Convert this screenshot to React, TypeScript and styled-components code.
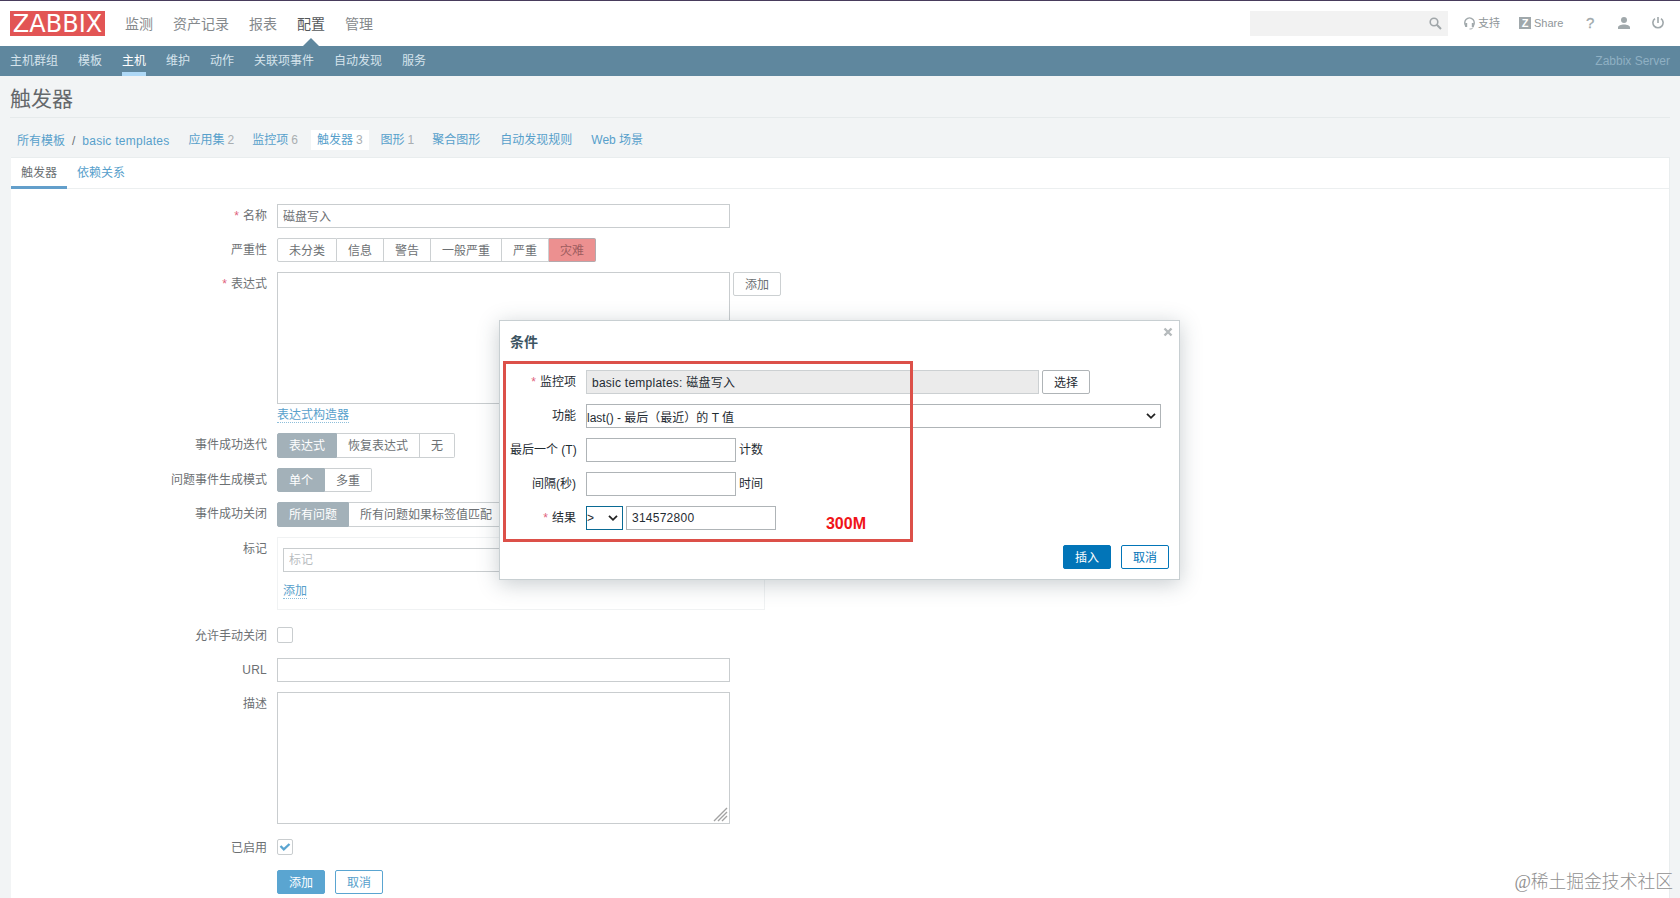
import React from "react";
import styled, { createGlobalStyle, css } from "styled-components";

const Global = createGlobalStyle`
  *, *::before, *::after { box-sizing: border-box; }
  html, body { height: 898px; overflow: hidden; }
  body {
    margin: 0;
    background: #f2f4f5;
    font-family: "Liberation Sans", "Noto Sans CJK SC", sans-serif;
    font-size: 12px;
    color: #6c7073;
  }
  input, textarea, button { font: inherit; color: inherit; margin: 0; }
`;

const Page = styled.div`
  position: relative;
  height: 898px;
  overflow: hidden;
  border-top: 1px solid #483b5c;
`;

const Header = styled.header`
  display: flex;
  align-items: center;
  height: 45px;
  padding: 0 10px;
  background: #fff;
`;

const Logo = styled.div`
  width: 95px;
  height: 25px;
  background: #e25555;
  color: #fff;
  font: 24px/27px "DejaVu Sans", sans-serif;
  text-align: center;
  white-space: nowrap;
`;

const MainMenu = styled.nav`
  display: flex;
  gap: 20px;
  margin-left: 20px;
  font-size: 14px;
  line-height: 47px;
  height: 45px;
`;

const MainItem = styled.a<{ $active?: boolean }>`
  position: relative;
  height: 45px;
  color: ${(p) => (p.$active ? "#54585b" : "#85898c")};
  ${(p) =>
    p.$active &&
    css`
      &::after {
        content: "";
        position: absolute;
        left: 6px;
        bottom: 0;
        border: 8px solid transparent;
        border-top: 0;
        border-bottom-color: #5f879e;
      }
    `}
`;

const UserTools = styled.div`
  display: flex;
  align-items: center;
  margin-left: auto;
  padding-right: 6px;
  padding-bottom: 1px;
  font-size: 11px;
  color: #8f9699;
  svg { display: block; }
`;

const Search = styled.div`
  display: flex;
  align-items: center;
  justify-content: flex-end;
  width: 198px;
  height: 25px;
  margin: 1px 16px 0 0;
  padding-right: 6px;
  background: #f2f2f2;
`;

const Tool = styled.a<{ $w?: number }>`
  display: flex;
  align-items: center;
  gap: 3px;
  width: ${(p) => (p.$w ? `${p.$w}px` : "auto")};
  line-height: 16px;
  white-space: nowrap;
`;

const ShareMark = styled.span`
  width: 12px;
  height: 12px;
  background: #a0a8ab;
  color: #fff;
  font-weight: bold;
  font-size: 11px;
  line-height: 12px;
  text-align: center;
`;

const HelpMark = styled.span`
  font-size: 15px;
  -webkit-text-stroke: 0.3px #a0a8ab;
  color: #a0a8ab;
`;

const SubMenu = styled.nav`
  display: flex;
  gap: 20px;
  height: 30px;
  padding: 0 10px;
  background: #5f879e;
  color: #d5e3ec;
  line-height: 31px;
`;

const SubItem = styled.a<{ $active?: boolean }>`
  height: 30px;
  ${(p) => p.$active && "color: #fff; border-bottom: 4px solid #aed8f6;"}
`;

const ServerName = styled.span`
  margin-left: auto;
  color: #8fb0c3;
`;

const Title = styled.h1`
  margin: 0 10px;
  height: 42px;
  border-bottom: 1px solid #e6eaeb;
  font-size: 21px;
  font-weight: 400;
  line-height: 45px;
  color: #64686b;
`;

const Crumbs = styled.div`
  display: flex;
  height: 39px;
  padding: 12px 16px 0 17px;
  color: #57a0cb;
  line-height: 21px;
  white-space: nowrap;
`;

const Crumb = styled.a<{ $ml?: number; $selected?: boolean }>`
  display: flex;
  gap: 3px;
  height: 20px;
  margin-left: ${(p) => p.$ml ?? 0}px;
  ${(p) => p.$selected && "background: #fff; padding: 0 6px;"}
`;

const Path = styled.div`
  display: flex;
  line-height: 23px;
`;

const Count = styled.span`
  color: #a9aeb1;
`;

const Slash = styled.span`
  margin-left: 7px;
  color: #6c7073;
`;

const Latin = styled.span`
  letter-spacing: 0.25px;
`;

const Panel = styled.main`
  margin: 0 10px 0 11px;
  height: 760px;
  background: #fff;
  border: solid #e9edee;
  border-width: 1px 1px 0 0;
`;

const Tabs = styled.div`
  display: flex;
  height: 31px;
  border-bottom: 1px solid #eceff0;
  line-height: 31px;
`;

const Tab = styled.a<{ $active?: boolean }>`
  height: 31px;
  padding: 0 10px;
  color: ${(p) => (p.$active ? "#6c7073" : "#57a0cb")};
  ${(p) => p.$active && "border-bottom: 3px solid #639fcb;"}
`;

const Form = styled.form`
  padding-top: 15px;
  display: flex;
  flex-direction: column;
  gap: 10px;
`;

const Row = styled.div<{ $h?: number; $mt?: number }>`
  display: flex;
  flex: none;
  height: ${(p) => p.$h ?? 24}px;
  margin-top: ${(p) => p.$mt ?? 0}px;
`;

const Label = styled.label<{ $w?: number; $required?: boolean }>`
  width: ${(p) => p.$w ?? 256}px;
  margin-right: 10px;
  text-align: right;
  line-height: 25px;
  white-space: nowrap;
  ${(p) =>
    p.$required &&
    css`
      &::before {
        content: "*";
        margin-right: 4px;
        color: #e0627c;
      }
    `}
`;

const Input = styled.input<{ $w: number; $dark?: boolean; $drop?: number }>`
  width: ${(p) => p.$w}px;
  height: 24px;
  padding: 0 5px ${(p) => 2 - (p.$drop ?? 0)}px;
  border: 1px solid ${(p) => (p.$dark ? "#afb4b7" : "#c9cdcf")};
  border-radius: 0;
  background: #fff;
  outline: none;
  letter-spacing: ${(p) => (p.$dark ? "0.25px" : "normal")};
  &::placeholder { color: #b9bdbf; opacity: 1; }
  &:read-only { background: #ebebeb; border-color: #ccd0d2; }
`;

const Area = styled.div`
  display: flex;
  align-items: flex-end;
  justify-content: flex-end;
  width: 453px;
  height: 132px;
  padding: 0 1px 1px 0;
  border: 1px solid #c9cdcf;
`;

const Stack = styled.div`
  display: flex;
  flex-direction: column;
  align-items: flex-start;
`;

const DotLink = styled.a`
  color: #57a0cb;
  height: 19px;
  line-height: 14px;
  padding-top: 4px;
  border-bottom: 1px dotted #8dbfdb;
`;

const Segments = styled.div`
  display: flex;
  height: 100%;
`;

const Segment = styled.span<{ $on?: boolean; $danger?: boolean }>`
  display: flex;
  align-items: center;
  height: 100%;
  padding: 0 11px 2px;
  border: 1px solid #ccd0d2;
  border-left-width: 0;
  white-space: nowrap;
  &:first-child { border-left-width: 1px; border-radius: 2px 0 0 2px; }
  &:last-child { border-radius: 0 2px 2px 0; }
  ${(p) => p.$on && "background: #a3b1b9; border-color: #a3b1b9; color: #fff;"}
  ${(p) => p.$danger && "background: #ec9090; border-color: #b3a9ad; color: #9d5c5e;"}
`;

const TagBox = styled.div`
  display: flex;
  flex-direction: column;
  align-items: flex-start;
  width: 488px;
  height: 73px;
  padding: 10px 5px;
  border: 1px solid #f0f2f3;
  gap: 8px;
`;

const Check = styled.span`
  display: flex;
  align-items: center;
  justify-content: center;
  width: 16px;
  height: 16px;
  margin-top: 3px;
  border: 1px solid #c9cdcf;
  border-radius: 2px;
`;

const tones = {
  plain: "background:#fff;border-color:#ccd0d2;color:#6c7073;",
  plainDark: "background:#fff;border-color:#afb4b7;color:#1f2c33;",
  soft: "background:#5aa5d1;border-color:#5aa5d1;color:#fff;",
  softOutline: "background:#fff;border-color:#5aa5d1;color:#57a0cb;",
  strong: "background:#0275b8;border-color:#0275b8;color:#fff;",
  strongOutline: "background:#fff;border-color:#0275b8;color:#0275b8;",
};

const Button = styled.button<{ $tone: keyof typeof tones; $ml?: number }>`
  width: 48px;
  height: 24px;
  padding: 2px 0 0;
  margin-left: ${(p) => p.$ml ?? 0}px;
  border: 1px solid;
  border-radius: 2px;
  line-height: 20px;
  ${(p) => tones[p.$tone]}
`;

const Dialog = styled.section`
  position: absolute;
  left: 499px;
  top: 319px;
  width: 681px;
  height: 260px;
  padding: 0 10px;
  background: #fff;
  border: 1px solid #c8cfd2;
  box-shadow: 0 4px 20px rgba(50, 70, 80, 0.27);
  color: #1f2c33;
`;

const DialogTitle = styled.h4`
  margin: 0;
  height: 49px;
  font-size: 14px;
  line-height: 42px;
  color: #3c5563;
`;

const Close = styled.span`
  position: absolute;
  right: 6px;
  top: 6px;
  line-height: 0;
`;

const Fields = styled.div`
  display: flex;
  flex-direction: column;
  gap: 10px;
`;

const Select = styled.div<{ $w: number; $focus?: boolean }>`
  display: flex;
  align-items: center;
  justify-content: space-between;
  width: ${(p) => p.$w}px;
  height: 24px;
  padding: 0 4px 0 0;
  margin-right: 3px;
  border: 1px solid ${(p) => (p.$focus ? "#0a6a94" : "#afb4b7")};
  white-space: pre;
`;

const Unit = styled.span`
  margin-left: 3px;
  line-height: 25px;
`;

const Actions = styled.div`
  display: flex;
  justify-content: flex-end;
  margin-top: 15px;
`;

const Frame = styled.div`
  position: absolute;
  left: 503px;
  top: 360px;
  width: 410px;
  height: 181px;
  border: 3px solid #dc5049;
`;

const Note = styled.strong`
  position: absolute;
  right: 44px;
  bottom: 6px;
  font-size: 16px;
  line-height: 18px;
  color: #f01318;
`;

const Watermark = styled.div`
  position: absolute;
  right: 7px;
  bottom: 4px;
  font: 300 17.8px/24px "Liberation Serif", "Noto Sans CJK SC", serif;
  color: #909090;
  white-space: nowrap;
`;

const Chevron = () => (
  <svg width="10" height="8" viewBox="0 0 10 8" fill="none" stroke="#222" strokeWidth="1.8">
    <path d="M1 1.8 5 5.8 9 1.8" />
  </svg>
);

const severities = ["未分类", "信息", "警告", "一般严重", "严重"];
const sections = ["主机群组", "模板", "主机", "维护", "动作", "关联项事件", "自动发现", "服务"];

export default function App() {
  return (
    <Page>
      <Global />
      <Header>
        <Logo>ZABBIX</Logo>
        <MainMenu>
          {["监测", "资产记录", "报表", "配置", "管理"].map((m) => (
            <MainItem key={m} $active={m === "配置"}>{m}</MainItem>
          ))}
        </MainMenu>
        <UserTools>
          <Search>
            <svg width="13" height="13" viewBox="0 0 13 13" fill="none" stroke="#a0a6a9">
              <circle cx="5" cy="5" r="3.8" strokeWidth="1.6" />
              <path d="M7.8 7.8 12 12" strokeWidth="2" />
            </svg>
          </Search>
          <Tool $w={55}>
            <svg width="11" height="13" viewBox="0 0 11 13" fill="none" stroke="#a0a8ab" strokeWidth="1.4">
              <path d="M2.2 9.5C.3 7.8.3 4.3 2 2.5 4 .5 7 .5 9 2.5c1.7 1.8 1.7 5.3-.2 7" />
              <path d="M2.2 6v4M8.8 6v4" strokeWidth="2" />
              <path d="M9 10.5c-.5 1.2-1.5 1.5-3.5 1.5" strokeWidth="1" />
            </svg>
            支持
          </Tool>
          <Tool $w={67}>
            <ShareMark>Z</ShareMark>Share
          </Tool>
          <Tool $w={32}><HelpMark>?</HelpMark></Tool>
          <Tool $w={34}>
            <svg width="12" height="12" viewBox="0 0 12 12" fill="#a0a8ab">
              <circle cx="6" cy="3" r="3" />
              <path d="M0 12v-1.5C0 8.5 3 7.5 6 7.5s6 1 6 3V12z" />
            </svg>
          </Tool>
          <Tool $w={12}>
            <svg width="12" height="12" viewBox="0 0 12 12" fill="none" stroke="#a0a8ab" strokeWidth="1.6">
              <path d="M6 0v6M3 1.6a5.1 5.1 0 1 0 6 0" />
            </svg>
          </Tool>
        </UserTools>
      </Header>
      <SubMenu>
        {sections.map((s) => (
          <SubItem key={s} $active={s === "主机"}>{s}</SubItem>
        ))}
        <ServerName>Zabbix Server</ServerName>
      </SubMenu>
      <Title>触发器</Title>
      <Crumbs>
        <Path>
          <Crumb>所有模板</Crumb>
          <Slash>/</Slash>
          <Crumb $ml={7}><Latin>basic templates</Latin></Crumb>
        </Path>
        <Crumb $ml={19}>应用集<Count>2</Count></Crumb>
        <Crumb $ml={18}>监控项<Count>6</Count></Crumb>
        <Crumb $ml={13} $selected>触发器<Count>3</Count></Crumb>
        <Crumb $ml={12}>图形<Count>1</Count></Crumb>
        <Crumb $ml={18}>聚合图形</Crumb>
        <Crumb $ml={20}>自动发现规则</Crumb>
        <Crumb $ml={19}>Web 场景</Crumb>
      </Crumbs>
      <Panel>
        <Tabs>
          <Tab $active>触发器</Tab>
          <Tab>依赖关系</Tab>
        </Tabs>
        <Form>
          <Row>
            <Label $required>名称</Label>
            <Input $w={453} defaultValue="磁盘写入" />
          </Row>
          <Row>
            <Label>严重性</Label>
            <Segments>
              {severities.map((s) => <Segment key={s}>{s}</Segment>)}
              <Segment $danger>灾难</Segment>
            </Segments>
          </Row>
          <Row $h={151}>
            <Label $required>表达式</Label>
            <Stack>
              <Area />
              <DotLink>表达式构造器</DotLink>
            </Stack>
            <Button type="button" $tone="plain" $ml={3}>添加</Button>
          </Row>
          <Row $h={25}>
            <Label>事件成功迭代</Label>
            <Segments>
              <Segment $on>表达式</Segment>
              <Segment>恢复表达式</Segment>
              <Segment>无</Segment>
            </Segments>
          </Row>
          <Row>
            <Label>问题事件生成模式</Label>
            <Segments>
              <Segment $on>单个</Segment>
              <Segment>多重</Segment>
            </Segments>
          </Row>
          <Row $h={25}>
            <Label>事件成功关闭</Label>
            <Segments>
              <Segment $on>所有问题</Segment>
              <Segment>所有问题如果标签值匹配</Segment>
            </Segments>
          </Row>
          <Row $h={73}>
            <Label>标记</Label>
            <TagBox>
              <Input $w={300} $drop={2} placeholder="标记" />
              <DotLink>添加</DotLink>
            </TagBox>
          </Row>
          <Row $mt={4}>
            <Label>允许手动关闭</Label>
            <Check />
          </Row>
          <Row>
            <Label><Latin>URL</Latin></Label>
            <Input $w={453} />
          </Row>
          <Row $h={132}>
            <Label>描述</Label>
            <Area>
              <svg width="15" height="15" viewBox="0 0 15 15" stroke="#a2a2a2" strokeWidth="1.4">
                <path d="M1 14 14 1M5 14 14 5M9 14 14 9" />
              </svg>
            </Area>
          </Row>
          <Row $mt={2}>
            <Label>已启用</Label>
            <Check>
              <svg width="12" height="10" viewBox="0 0 12 10" fill="none" stroke="#5aa5d1" strokeWidth="2.3">
                <path d="M1.5 4 4.8 7.3 10.5 2" />
              </svg>
            </Check>
          </Row>
          <Row>
            <Label />
            <Button type="button" $tone="soft">添加</Button>
            <Button type="button" $tone="softOutline" $ml={10}>取消</Button>
          </Row>
        </Form>
      </Panel>
      <Dialog>
        <DialogTitle>条件</DialogTitle>
        <Close>
          <svg width="10" height="10" viewBox="0 0 10 10" stroke="#b5babc" strokeWidth="2.4">
            <path d="M1.5 1.5 8.5 8.5M8.5 1.5 1.5 8.5" />
          </svg>
        </Close>
        <Fields>
          <Row>
            <Label $w={66} $required>监控项</Label>
            <Input $w={453} $dark readOnly value="basic templates: 磁盘写入" />
            <Button type="button" $tone="plainDark" $ml={3}>选择</Button>
          </Row>
          <Row>
            <Label $w={66}>功能</Label>
            <Select $w={575}>last() - 最后（最近）的 T 值<Chevron /></Select>
          </Row>
          <Row>
            <Label $w={66}>最后一个 (T)</Label>
            <Input $w={150} $dark />
            <Unit>计数</Unit>
          </Row>
          <Row>
            <Label $w={66}>间隔(秒)</Label>
            <Input $w={150} $dark />
            <Unit>时间</Unit>
          </Row>
          <Row>
            <Label $w={66} $required>结果</Label>
            <Select $w={37} $focus>&gt;<Chevron /></Select>
            <Input $w={150} $dark $drop={2} defaultValue="314572800" />
          </Row>
        </Fields>
        <Actions>
          <Button type="button" $tone="strong">插入</Button>
          <Button type="button" $tone="strongOutline" $ml={10}>取消</Button>
        </Actions>
      </Dialog>
      <Frame><Note>300M</Note></Frame>
      <Watermark>@稀土掘金技术社区</Watermark>
    </Page>
  );
}
